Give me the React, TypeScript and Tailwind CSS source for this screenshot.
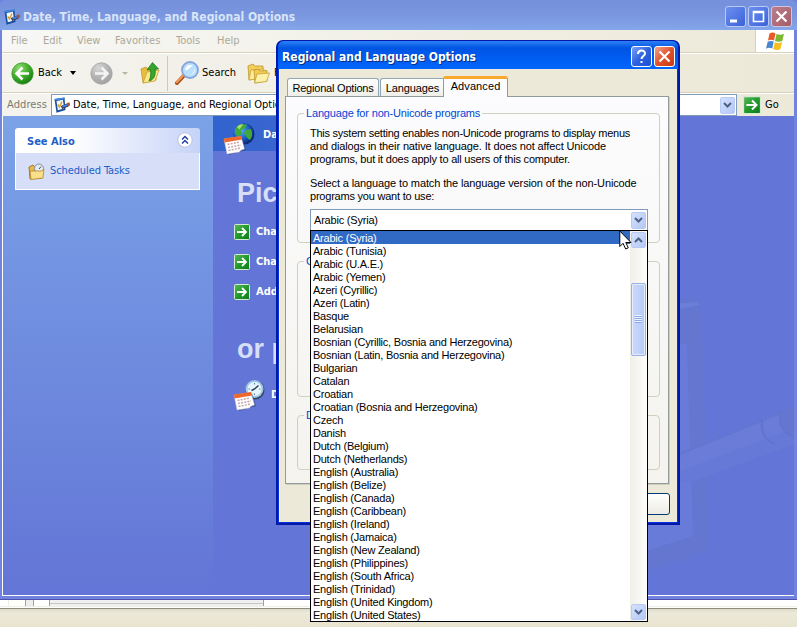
import React from "react";

const tahoma = "font-['DejaVu_Sans_Condensed','DejaVu_Sans',sans-serif] [font-stretch:condensed]";
const sans = "font-['Liberation_Sans',Arial,sans-serif]";

const languages = [
  "Arabic (Syria)", "Arabic (Tunisia)", "Arabic (U.A.E.)", "Arabic (Yemen)", "Azeri (Cyrillic)",
  "Azeri (Latin)", "Basque", "Belarusian", "Bosnian (Cyrillic, Bosnia and Herzegovina)",
  "Bosnian (Latin, Bosnia and Herzegovina)", "Bulgarian", "Catalan", "Croatian",
  "Croatian (Bosnia and Herzegovina)", "Czech", "Danish", "Dutch (Belgium)", "Dutch (Netherlands)",
  "English (Australia)", "English (Belize)", "English (Canada)", "English (Caribbean)",
  "English (Ireland)", "English (Jamaica)", "English (New Zealand)", "English (Philippines)",
  "English (South Africa)", "English (Trinidad)", "English (United Kingdom)", "English (United States)",
];

function TaskIcon() {
  return (
    <svg width="16" height="16" viewBox="0 0 16 16" className="shrink-0">
      <path d="M0.500 2 10.500 0.500 11.500 13 2.500 15.700Z" fill="#174f9e" />
      <path d="M0.500 2 10.500 0.500 10.700 2 1 3.500Z" fill="#3f8be6" />
      <path d="M2.500 4 9 2.800 10 11.500 3.800 13.300Z" fill="#f4f8ff" />
      <path d="M3.800 7.500 5.500 10 8 4.500" fill="none" stroke="#d6a23a" strokeWidth="1.500" />
      <path d="M7.500 10.500 14 8" stroke="#3a3038" strokeWidth="3.400" />
      <path d="M8.500 9.800 13 8" stroke="#3b82e8" strokeWidth="2" />
      <path d="M13 7.800 15.800 6.800" stroke="#a5553f" strokeWidth="3.200" />
    </svg>
  );
}

function RoundArrow({ forward = false }: { forward?: boolean }) {
  return (
    <svg width="23" height="23" viewBox="0 0 23 23" className="shrink-0">
      <defs>
        <radialGradient id={forward ? "fwd" : "back"} cx="0.35" cy="0.25" r="0.8">
          <stop offset="0" stopColor={forward ? "#d6d6d6" : "#8fdc72"} />
          <stop offset="0.55" stopColor={forward ? "#b3b3b3" : "#3fae2a"} />
          <stop offset="1" stopColor={forward ? "#a0a0a0" : "#127a10"} />
        </radialGradient>
      </defs>
      <circle cx="11.500" cy="11.500" r="10.700" fill={`url(#${forward ? "fwd" : "back"})`} stroke={forward ? "#a9a9a9" : "#4a9a3e"} strokeWidth="0.800" />
      {forward ? (
        <path d="M5 11.500h12M11.500 5.500l6 6-6 6" fill="none" stroke="#f4f4f4" strokeWidth="2.600" />
      ) : (
        <path d="M18 11.500H6M11.500 5.500l-6 6 6 6" fill="none" stroke="#fff" strokeWidth="2.600" />
      )}
    </svg>
  );
}

function GoArrow({ size = 16 }: { size?: number }) {
  return (
    <svg width={size} height={size} viewBox="0 0 16 16" className="shrink-0">
      <defs>
        <linearGradient id={`go${size}`} x1="0" y1="0" x2="1" y2="1">
          <stop offset="0" stopColor="#5cb85a" />
          <stop offset="0.500" stopColor="#229a2c" />
          <stop offset="1" stopColor="#0e7a18" />
        </linearGradient>
      </defs>
      <rect x="0.500" y="0.500" width="15" height="15" rx="1" fill={`url(#go${size})`} stroke="#d5ead2" />
      <path d="M3 8h9M8 4l4 4-4 4" fill="none" stroke="#fff" strokeWidth="1.800" />
    </svg>
  );
}

function Calendar({ clock = false }: { clock?: boolean }) {
  return (
    <svg width="32" height="32" viewBox="0 0 32 32" className="shrink-0">
      <defs>
        <radialGradient id="globe" cx="0.350" cy="0.350" r="0.700">
          <stop offset="0" stopColor="#5fb4ff" />
          <stop offset="0.600" stopColor="#1a5fc8" />
          <stop offset="1" stopColor="#0a2c7c" />
        </radialGradient>
      </defs>
      {clock ? (
        <g>
          <circle cx="22" cy="11" r="9.500" fill="#34475f" />
          <circle cx="21.500" cy="10" r="9" fill="#9fc7e6" />
          <circle cx="21.500" cy="10" r="7" fill="#e6f5fd" />
          <path d="M21.500 10 25.500 6.500M18.500 11.500l3-1.500" stroke="#27415e" strokeWidth="1.500" />
          <path d="M21.500 4v1.500M21.500 14.500V16M15.500 10H17M26 10h1.500" stroke="#5d7c9a" />
        </g>
      ) : (
        <g>
          <circle cx="21" cy="11" r="10.500" fill="#102c70" />
          <circle cx="20.500" cy="10.500" r="10" fill="url(#globe)" />
          <path d="M12 6c3-5 9-5.500 12-4l-3 4-3 1 1 4-4 3-3-4ZM23 7l5-1c2 5 1 9-1.500 11l-3-3-2.500-4Z" fill="#42a838" />
          <path d="M14 4c2-2.500 5-3 6-2.500l-3.500 5Z" fill="#a4df70" />
        </g>
      )}
      <path d="M3 17 19 14l4 13-17 5Z" fill="#2d3a69" opacity="0.600" />
      <path d="M1 16 18 13.500 21.500 26c-3 1-4 1-5 3L4 31Z" fill="#fff" stroke="#b9bfd6" strokeWidth="0.500" />
      <path d="M1 15.500 18 13l1 3.500L1.500 19.500Z" fill="#f0672c" />
      <path d="M4.500 21.500 17 19M5 24.500 18 22M5.500 27.500 17 25" stroke="#c3a5a8" strokeWidth="1.500" strokeDasharray="2 1.200" />
    </svg>
  );
}

function UpFolder() {
  return (
    <svg width="20" height="22" viewBox="0 0 20 22" className="shrink-0">
      <path d="M1 7 6 5l2 2 8-1v12L3 21Z" fill="#e9bd3f" stroke="#b98f23" strokeWidth="0.700" />
      <path d="M3 21 7 10l12-2-4 11Z" fill="#fbe88b" stroke="#c19a2a" strokeWidth="0.700" />
      <path d="M12.500 0.500 18.500 7h-3.500c1 6-1 11-6 12 2-4 2-8 1.500-11.500L7 8Z" fill="#36a62c" stroke="#1c7a1a" strokeWidth="0.800" />
    </svg>
  );
}

function Magnifier() {
  return (
    <svg width="24" height="24" viewBox="0 0 24 24" className="shrink-0">
      <path d="M2 22 9 14.500" stroke="#a64f1d" strokeWidth="4" strokeLinecap="round" />
      <path d="M1.800 21.300 8.500 14" stroke="#f19a55" strokeWidth="2" strokeLinecap="round" />
      <circle cx="15" cy="9" r="8" fill="#b9e0fb" stroke="#86a4dc" strokeWidth="1.800" />
      <path d="M10 9c1-5 5-6 8-4-3 0-4 5-8 4Z" fill="#fff" />
      <path d="M20 7c1 4-2 7-5 7 3-1 4-4 5-7Z" fill="#fff" opacity="0.700" />
    </svg>
  );
}

function Folders() {
  return (
    <svg width="23" height="21" viewBox="0 0 23 21" className="shrink-0">
      <path d="M1 3 6 1l2 2h8v11L2 17Z" fill="#f3cf5a" stroke="#be942a" strokeWidth="0.800" />
      <path d="M2 17 4 7l13-1-2 9Z" fill="#fcec9c" stroke="#c19a2a" strokeWidth="0.700" />
      <path d="M7 7l4-1 2 2 7-.5V18L8 20Z" fill="#f2cb52" stroke="#be942a" strokeWidth="0.800" />
      <path d="M7.500 20 10 11l12.500-1-3 8.500Z" fill="#fdf0a8" stroke="#c19a2a" strokeWidth="0.700" />
    </svg>
  );
}

function WindowsFlag() {
  return (
    <svg width="20" height="19" viewBox="0 0 20 19">
      <path d="M4.500 1.500C7 0 9 .5 10.500 1.500L9 8.500C7 7.500 5 7.500 3 8.500Z" fill="#e8592b" />
      <path d="M11.500 2C14 3 16.500 3 19 1.800L17.300 9C15 10 12.500 10 10 9Z" fill="#7cb82f" />
      <path d="M2.700 9.800C5 8.500 7 8.800 8.700 9.600L7.200 16.500C5 15.500 3 15.600 1 16.700Z" fill="#4585d2" />
      <path d="M9.800 10.200C12 11.200 14.500 11.200 17 10L15.400 17C13 18.400 10.500 18.200 8.200 17Z" fill="#f5bf22" />
    </svg>
  );
}

function Chevron({ up = false }: { up?: boolean }) {
  return (
    <svg width="9" height="6" viewBox="0 0 9 6">
      <path d={up ? "M1 5 4.500 1.500 8 5" : "M1 1l3.500 3.500L8 1"} fill="none" stroke="#4d6185" strokeWidth="2" />
    </svg>
  );
}

function ScrollButton({ up = false, tall = false }: { up?: boolean; tall?: boolean }) {
  return (
    <div className={`flex w-[15px] shrink-0 items-center justify-center rounded-[2px] border border-[#b7caf5] bg-linear-to-br from-[#d5e1fd] to-[#b4c8f6] ${tall ? "h-[17px]" : "h-4"}`}>
      <Chevron up={up} />
    </div>
  );
}

function TitleButton({ kind }: { kind: "min" | "max" | "close" | "help" | "closeActive" }) {
  const tone = {
    min: "border-[#b9c9f2] bg-linear-to-br from-[#6d8ff0] to-[#3a62d8]",
    max: "border-[#b9c9f2] bg-linear-to-br from-[#6d8ff0] to-[#3a62d8]",
    close: "border-[#d0c5dc] bg-linear-to-br from-[#bd7d8c] to-[#a35d68]",
    help: "border-white bg-linear-to-br from-[#7a9ff5] via-[#2f62e0] to-[#1c50d4]",
    closeActive: "border-white bg-linear-to-br from-[#f0a088] via-[#e2512c] to-[#c83a12]",
  }[kind];
  return (
    <div className={`flex size-[21px] items-center justify-center rounded-[3px] border ${tone}`}>
      <svg width="19" height="19" viewBox="0 0 19 19">
        {kind === "min" && <path d="M4 14h7" stroke="#fff" strokeWidth="3" />}
        {kind === "max" && <path d="M4.500 4.500h10v10h-10zM4 5.500h11" fill="none" stroke="#fff" strokeWidth="1.600" />}
        {(kind === "close" || kind === "closeActive") && <path d="M4.500 4.500l10 10M14.500 4.500l-10 10" stroke="#fff" strokeWidth="2.200" />}
        {kind === "help" && (
          <g>
            <path d="M6 7c0-4.500 7-4.500 7-.5 0 2.500-3.500 2.500-3.500 5.500" fill="none" stroke="#fff" strokeWidth="2" />
            <path d="M8.500 14h2v2h-2z" fill="#fff" />
          </g>
        )}
      </svg>
    </div>
  );
}

function Explorer() {
  return (
    <div className={`flex h-[600px] w-full flex-col border-b border-[#5050b4] bg-[#7183dc] ${tahoma} text-[11px] text-black`}>
      <div className="flex h-[30px] shrink-0 items-center rounded-t-[6px] bg-linear-to-b from-[#7590dc] via-[#7a96df] to-[#84a6ea] pt-[3px] pr-[5px] pl-1">
        <TaskIcon />
        <span className="ml-[3px] grow pt-px text-[12px] font-bold whitespace-nowrap text-[#d8e4f8]">
          Date, Time, Language, and Regional Options
        </span>
        <div className="flex gap-0.5">
          <TitleButton kind="min" />
          <TitleButton kind="max" />
          <TitleButton kind="close" />
        </div>
      </div>

      <div className="mr-[3px] ml-0.5 flex h-[566px] flex-col">
        <div className="flex h-[23px] shrink-0 border-b border-[#d8d2bd] bg-linear-to-r from-[#f7f7f5] to-[#ece9d8] text-[#aca899]">
          <div className="flex grow items-center pl-[9px]">
            <span className="w-8">File</span>
            <span className="w-[34px]">Edit</span>
            <span className="w-[38px]">View</span>
            <span className="w-[61px] tracking-[0.1px]">Favorites</span>
            <span className="w-[41px]">Tools</span>
            <span>Help</span>
          </div>
          <div className="flex w-[39px] items-center justify-center border-l border-[#d8d2bd] bg-white">
            <WindowsFlag />
          </div>
        </div>

        <div className="flex h-[40px] shrink-0 items-center border-t border-b border-t-white border-b-[#d8d2bd] bg-linear-to-r from-[#f4f3ee] to-[#ece9d8] pl-[9px]">
          <RoundArrow />
          <span className="ml-1 w-8 pt-px">Back</span>
          <span className="size-0 border-x-[3.5px] border-t-[4px] border-x-transparent border-t-black" />
          <span className="w-[14px]" />
          <RoundArrow forward />
          <span className="ml-[9px] size-0 border-x-[3px] border-t-[3px] border-x-transparent border-t-[#b8b5a5]" />
          <span className="w-3" />
          <UpFolder />
          <span className="mr-[7px] ml-[7px] h-[35px] w-px bg-[#d0c9b0]" />
          <Magnifier />
          <span className="ml-[3px] w-[45px] pt-px">Search</span>
          <Folders />
          <span className="ml-1 pt-px">F</span>
        </div>

        <div className="flex h-[23px] shrink-0 items-center border-t border-white bg-linear-to-r from-[#f4f3ee] to-[#ece9d8] pl-[5px]">
          <span className="w-11 tracking-[0.1px] text-[#7d7b70]">Address</span>
          <div className="flex h-[22px] w-[686px] items-center border border-[#7f9db9] bg-white pr-px pl-0.5">
            <TaskIcon />
            <span className="ml-[3px] grow pt-px tracking-[-0.05px] whitespace-nowrap">Date, Time, Language, and Regional Optic</span>
            <ScrollButton tall />
          </div>
          <span className="w-[6px]" />
          <GoArrow size={18} />
          <span className="ml-1">Go</span>
        </div>

        <div className="flex grow overflow-hidden border-b border-l border-white">
          <div className="w-[210px] shrink-0 bg-linear-to-b from-[#7ba2e7] to-[#6375d6] pt-3 pl-3">
            <div className="w-[185px]">
              <div className="flex h-[25px] items-center justify-between rounded-t-[3px] bg-linear-to-r from-white from-30% to-[#c6d3f7] pr-[7px] pl-3">
                <span className="pt-1 font-bold text-[#215dc6]">See Also</span>
                <svg width="16" height="16" viewBox="0 0 16 16" className="-mt-px">
                  <circle cx="8" cy="8" r="7.200" fill="#fff" stroke="#b7c3e2" />
                  <path d="M5 7.500l3-3 3 3M5 11.500l3-3 3 3" fill="none" stroke="#21419c" strokeWidth="1.500" />
                </svg>
              </div>
              <div className="flex h-[37px] items-center border border-t-0 border-white bg-[#d6dff7] pl-3 text-[#215dc6]">
                <svg width="17" height="17" viewBox="0 0 17 17">
                  <path d="M1 4 5 2l2 2h7v11l-12 1Z" fill="#e8b94a" stroke="#a77a22" />
                  <circle cx="11" cy="5.500" r="4.500" fill="#e5edf4" stroke="#7f8fa0" />
                  <path d="M11 6 13 3.500" stroke="#444" />
                  <path d="M2 8h12l2-2-1 9-12 1.500Z" fill="#fbe08c" stroke="#b28528" strokeWidth="0.800" />
                </svg>
                <span className="ml-[5px] tracking-[-0.1px]">Scheduled Tasks</span>
              </div>
            </div>
          </div>

          <div className="relative flex grow flex-col overflow-hidden bg-[#6375d6]">
            <Watermark />
            <div className="flex h-[35px] shrink-0 items-start bg-linear-to-r from-[#3163ce] to-[#6375d6] to-80% pt-[7px] pl-[10px]">
              <Calendar />
              <span className="ml-2 pt-1 font-bold text-white">Da</span>
            </div>
            <h1 className={`mt-[25px] ml-6 h-[34px] text-[27px] leading-[34px] font-bold text-[#d6dff7] ${sans}`}>Pic</h1>
            <div className="mt-[14px] ml-[21px] flex flex-col gap-[14px] font-bold text-white">
              <div className="flex h-4 items-center gap-[6px]"><GoArrow /><span>Cha</span></div>
              <div className="flex h-4 items-center gap-[6px]"><GoArrow /><span>Cha</span></div>
              <div className="flex h-4 items-center gap-[6px]"><GoArrow /><span>Add</span></div>
            </div>
            <h1 className={`mt-[32px] ml-6 h-[34px] text-[27px] leading-[34px] font-bold text-[#d6dff7] ${sans}`}>or p</h1>
            <div className="mt-[13px] ml-5 flex h-8 items-center font-bold text-white">
              <Calendar clock />
              <span className="ml-[6px]">D</span>
            </div>
          </div>
        </div>
      </div>
    </div>
  );
}

function Watermark() {
  return (
    <svg width="582" height="479" viewBox="0 0 582 479" className="absolute inset-0">
      <path d="M400 188 482 183q6 1 6 8L497 424q0 9-8 13L400 466Z" fill="#6476d0" />
      <path d="M400 193 484 186l3 3-20 4-67 7Z" fill="#6c7fd8" />
      <path d="M400 228 474 228 480 420 400 446Z" fill="#697bd8" />
      <path d="M467 337 582 290V328L480 365q-8 2-13 1Z" fill="#6a7cd8" />
      <path d="M467 337 582 290v2L467 339Z" fill="#6375cf" />
      <path d="M467 355 582 312v16L480 365q-8 2-13 1Z" fill="#6779d6" />
      <path d="M549 304q-2 18 13 24M568 296q-4 20 14 25" fill="none" stroke="#6173cd" strokeWidth="2" />
      <path d="M568 296 582 290v31q-16-6-14-25Z" fill="#6476cf" />
    </svg>
  );
}

function Group({ title, className, children }: { title: string; className: string; children?: React.ReactNode }) {
  return (
    <fieldset className={`ml-[11px] w-[363px] rounded-[4px] border border-[#d0d0bf] px-1.5 ${className}`}>
      <legend className="h-[13px] px-0.5 leading-[13px] tracking-[-0.17px] whitespace-nowrap text-[#0046d5]">{title}</legend>
      {children}
    </fieldset>
  );
}

function RegionalDialog() {
  return (
    <div className="absolute top-[40px] left-[276px] flex h-[485px] w-[404px] flex-col rounded-t-[7px] border-2 border-t border-[#0019a8] bg-[#0831d9]">
      <div className="flex h-[28px] shrink-0 items-center rounded-t-[6px] bg-linear-to-b from-[#2b80f5] via-[#0054e3] via-25% to-[#0066ff] pr-[3px] pl-1">
        <span className={`grow pt-1 text-[12px] font-bold whitespace-nowrap text-white [text-shadow:1px_1px_#0a2a80] ${tahoma}`}>
          Regional and Language Options
        </span>
        <div className="flex gap-0.5 pt-0.5">
          <TitleButton kind="help" />
          <TitleButton kind="closeActive" />
        </div>
      </div>

      <div className={`mx-px mb-px flex grow flex-col border-l border-[#f5f3ea] bg-[#ece9d8] pt-[7px] pl-[5px] text-[11px] text-black ${sans}`}>
        <div className="z-10 -mb-px flex h-[21px] items-end pl-0.5">
          <div className="mb-px flex h-[18px] w-[92px] items-center justify-center rounded-t-[3px] border border-b-0 border-[#91a7b4] bg-linear-to-b from-white to-[#efefe9] pt-px tracking-[-0.2px] whitespace-nowrap">Regional Options</div>
          <div className="mb-px ml-px flex h-[18px] w-[63px] items-center justify-center rounded-tl-[3px] border border-r-0 border-b-0 border-[#91a7b4] bg-linear-to-b from-white to-[#efefe9] pt-px pl-px tracking-[-0.1px]">Languages</div>
          <div className="flex h-[21px] w-[65px] justify-center rounded-t-[3px] border-x border-t-[3px] border-x-[#919b9c] border-t-[#f9a82e] bg-[#fcfcfe] leading-[15px] tracking-[0.1px]">Advanced</div>
        </div>

        <div className="h-[388px] w-[384px] shrink-0 border border-[#919b9c] bg-linear-to-b from-[#fcfcfe] to-[#f4f3ee] pt-[10px] shadow-[1px_1px_#d0cdbd]">
          <Group title="Language for non-Unicode programs" className="h-[136px]">
            <div className="mt-[7px] ml-1.5 leading-[13px] whitespace-nowrap">
              <p className="tracking-[-0.25px]">This system setting enables non-Unicode programs to display menus</p>
              <p className="tracking-[-0.12px]">and dialogs in their native language. It does not affect Unicode</p>
              <p className="tracking-[-0.22px]">programs, but it does apply to all users of this computer.</p>
            </div>
            <div className="mt-[11px] ml-1.5 leading-[13px] tracking-[-0.12px] whitespace-nowrap">
              <p>Select a language to match the language version of the non-Unicode</p>
              <p className="tracking-[-0.22px]">programs you want to use:</p>
            </div>
            <div className="mt-[6px] ml-1.5 flex h-[22px] w-[338px] items-center justify-between border border-[#7f9db9] bg-white pr-px pl-[3px]">
              <span className="tracking-[-0.2px]">Arabic (Syria)</span>
              <ScrollButton tall />
            </div>
          </Group>
          <Group title="C" className="mt-[12px] h-[142px]" />
          <Group title="D" className="mt-[12px] h-[61px]" />
        </div>

        <div className="mt-[9px] mr-[7px] flex justify-end">
          <div className="h-[22px] w-[75px] rounded-[3px] border border-[#003c74] bg-linear-to-b from-white to-[#ecebe5]" />
        </div>
      </div>
    </div>
  );
}

function LanguageList() {
  return (
    <div className={`absolute top-[230px] left-[310px] flex h-[392px] w-[338px] border border-black bg-white text-[11px] text-black ${sans}`}>
      <ul className="grow">
        {languages.map((name, i) => (
          <li key={name} className={`h-[13px] pl-0.5 leading-[15px] tracking-[-0.22px] whitespace-nowrap ${i === 0 ? "bg-[#316ac5] text-white" : ""}`}>
            {name}
          </li>
        ))}
      </ul>
      <div className="flex w-[17px] shrink-0 flex-col items-center bg-linear-to-r from-[#f0efe8] to-[#fefefb] pt-px">
        <ScrollButton up />
        <div className="mt-[35px] flex h-[73px] w-[15px] flex-col items-center justify-center gap-px rounded-[2px] border border-[#98b0e8] bg-linear-to-r from-[#cad8fd] to-[#b7cbf8] shadow-[inset_0_0_0_1px_#e6eefd]">
          {[0, 1, 2, 3].map((n) => (
            <span key={n} className="h-px w-[7px] bg-[#8caaf0] shadow-[0_-1px_#eef4fe]" />
          ))}
        </div>
        <div className="mt-auto mb-px">
          <ScrollButton />
        </div>
      </div>
    </div>
  );
}

export default function App() {
  return (
    <div className="relative h-[627px] w-[797px] overflow-hidden bg-[#ece9d8]">
      <Explorer />
      <div className="flex h-[7px] border-b border-[#f0efe6] bg-white">
        <span className="w-2" />
        <span className="w-[17px] border-l border-[#eeeee6] bg-[#fffffa]" />
        <span className="w-[9px] border-x border-[#a0a0a0] bg-[#eeeeee]" />
        <span className="w-[15px]" />
        <span className="flex w-[215px] items-center border-x border-[#a0a0a0] bg-[#f0f0f0]">
          <span className="h-px w-full bg-[#c8c8c8]" />
        </span>
      </div>
      <div className="h-[20px] border-t border-white bg-linear-to-b from-[#d9d6c7] via-[#ece9d8] via-25% to-[#e8e4d0] shadow-[inset_0_1px_#8f8c80]" />
      <RegionalDialog />
      <LanguageList />
      <svg width="13" height="21" viewBox="0 0 13 21" className="absolute top-[230px] left-[619px]">
        <path d="M.8 1v15.500L4 13.300l2.700 5.700 2.600-1.200-2.500-5.300h5.200Z" fill="#fff" stroke="#000" />
      </svg>
    </div>
  );
}
